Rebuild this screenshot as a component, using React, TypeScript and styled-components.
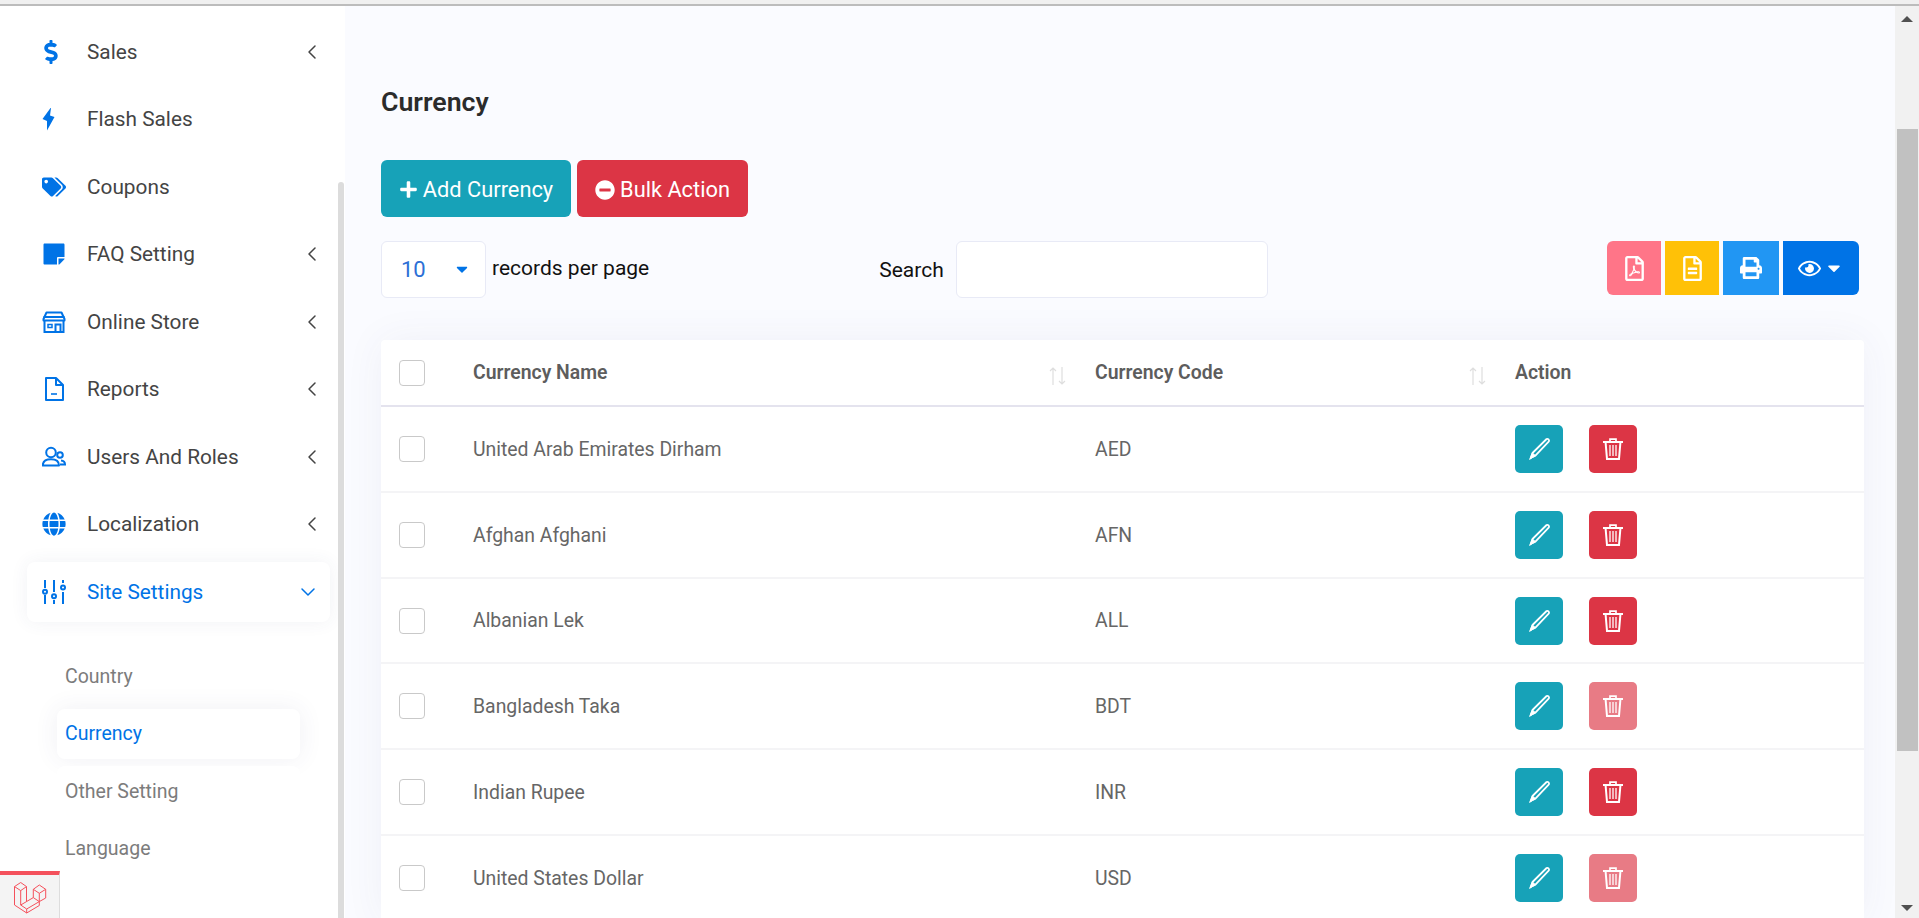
import React from 'react';
import styled, { createGlobalStyle } from 'styled-components';
import { FaDollarSign, FaTags, FaStickyNote, FaGlobe, FaPlus, FaMinusCircle, FaPrint, FaRegEye, FaCaretDown, FaRegFilePdf, FaRegFileAlt } from 'react-icons/fa';
import { FiChevronLeft, FiChevronDown } from 'react-icons/fi';

const GlobalStyle = createGlobalStyle`
  html, body { margin: 0; height: 100%; overflow: hidden; }
  body { font-family: Roboto, "Liberation Sans", sans-serif; background: #fff; }
  * { box-sizing: border-box; }
`;

const TopLine = styled.div`
  height: 6px;
  background: #f0f0f0;
  border-bottom: 2px solid #bcbcbc;
`;
const Shell = styled.div`
  display: flex;
  height: 912px;
  overflow: hidden;
`;
const Side = styled.aside`
  width: 345px;
  flex: none;
  display: flex;
  background: #fff;
  overflow: hidden;
`;
const SideBody = styled.nav`
  width: 338px;
  padding: 15.5px 8px 0 27px;
`;
const SideScroll = styled.div`
  width: 6px;
  height: 100%;
  padding-top: 176px;
  & > div { height: 100%; background: #dcdcdc; border-radius: 3px 3px 0 0; }
`;
const Item = styled.div<{ active?: boolean }>`
  height: 60px;
  margin-bottom: 7.5px;
  display: flex;
  align-items: center;
  padding: 0 6px 0 15px;
  border-radius: 8px;
  color: ${(p) => (p.active ? '#0073e6' : '#444')};
  background: #fff;
  box-shadow: ${(p) => (p.active ? '0 0 18px rgba(60,70,120,.07)' : 'none')};
  font-size: 20.8px;
`;
const ItemIcon = styled.span`
  width: 45px;
  flex: none;
  display: flex;
  align-items: center;
  color: #0073e6;
  font-size: 24px;
`;
const DollarIcon = styled(FaDollarSign)`
  margin-left: -3px;
`;
const ItemLabel = styled.span`
  flex: 1;
`;
const Chevron = styled.span<{ down?: boolean }>`
  display: flex;
  color: inherit;
  font-size: 24px;
  margin-right: ${(p) => (p.down ? '4px' : '0')};
  & svg { stroke-width: 1.5; }
`;
const SubList = styled.div`
  padding: 22px 30px 0 30px;
`;
const SubItem = styled.div<{ active?: boolean }>`
  height: 50px;
  margin-bottom: 7.5px;
  display: flex;
  align-items: center;
  padding-left: 8px;
  border-radius: 8px;
  font-size: 19.5px;
  color: ${(p) => (p.active ? '#0073e6' : '#7c7c7c')};
  background: #fff;
  box-shadow: ${(p) => (p.active ? '0 0 24px rgba(60,70,120,.08)' : 'none')};
`;
const Debugbar = styled.div`
  position: absolute;
  left: 0;
  top: 871px;
  width: 60px;
  height: 47px;
  background: #f4f4f4;
  border-top: 4px solid #f4515c;
  border-right: 1px solid #ddd;
  padding: 7px 0 0 14px;
`;
const Main = styled.main`
  flex: 1;
  min-width: 0;
  background: #fafbff;
  padding: 78px 31px 0 36px;
  overflow: hidden;
`;
const Title = styled.h1`
  margin: 0;
  height: 36px;
  line-height: 36px;
  font-size: 26.7px;
  font-weight: 600;
  color: #2b2b2b;
`;
const ButtonRow = styled.div`
  display: flex;
  gap: 6px;
  margin-top: 40px;
`;
const MainButton = styled.button<{ bg: string; w: number }>`
  width: ${(p) => p.w}px;
  height: 57px;
  border: 0;
  border-radius: 6px;
  padding: 2px 0 0;
  background: ${(p) => p.bg};
  color: #fff;
  font: 400 21.8px Roboto, sans-serif;
  display: flex;
  align-items: center;
  justify-content: center;
  gap: 5px;
`;
const Controls = styled.div`
  display: flex;
  align-items: flex-start;
  margin-top: 24px;
  height: 99px;
`;
const SelectBox = styled.div`
  width: 105px;
  height: 57px;
  background: #fff;
  border: 1px solid #e8eaf6;
  border-radius: 6px;
  display: flex;
  align-items: center;
  justify-content: space-between;
  padding: 0 14px 0 19px;
  color: #2c6fd6;
  font-size: 22px;
  & svg { color: #0073e6; font-size: 18px; margin-bottom: 2px; }
`;
const Records = styled.span`
  margin-left: 6px;
  line-height: 54px;
  font-size: 21px;
  color: #111;
`;
const SearchLabel = styled.label`
  margin-left: 230px;
  line-height: 58px;
  font-size: 21px;
  color: #111;
`;
const SearchInput = styled.div`
  width: 312px;
  height: 57px;
  margin-left: 12px;
  background: #fff;
  border: 1px solid #e8eaf6;
  border-radius: 6px;
`;
const ExportGroup = styled.div`
  margin-left: auto;
  margin-right: 5px;
  display: flex;
  gap: 4px;
`;
const ExportButton = styled.div<{ bg: string; w: number; pos?: string }>`
  width: ${(p) => p.w}px;
  height: 54px;
  background: ${(p) => p.bg};
  color: #fff;
  display: flex;
  align-items: center;
  justify-content: center;
  gap: 3px;
  font-size: 25px;
  border-radius: ${(p) => (p.pos === 'first' ? '6px 0 0 6px' : p.pos === 'last' ? '0 6px 6px 0' : '0')};
`;
const Card = styled.section`
  background: #fff;
  box-shadow: 0 0 40px rgba(60,70,120,.06);
  border-radius: 4px 4px 0 0;
`;
const Row = styled.div<{ head?: boolean; h: number }>`
  display: grid;
  grid-template-columns: 92px 622px 420px 1fr;
  height: ${(p) => p.h}px;
  align-items: center;
  border-bottom: 2px solid ${(p) => (p.head ? '#e4e3ee' : '#f4f4f6')};
  font-size: 19.4px;
  color: ${(p) => (p.head ? '#5d5d5d' : '#666')};
  font-weight: ${(p) => (p.head ? 600 : 400)};
`;
const CheckCell = styled.div`
  padding-left: 18px;
`;
const Check = styled.span`
  display: block;
  width: 26px;
  height: 26px;
  background: #fff;
  border: 1px solid #c9c9c9;
  border-radius: 4px;
`;
const HeadCell = styled.div`
  display: flex;
  justify-content: space-between;
  align-items: center;
`;
const SortIcon = styled.svg`
  width: 19px;
  height: 18px;
  margin-right: 28px;
  margin-top: 6px;
  color: #dedede;
`;
const ActionCell = styled.div`
  display: flex;
  gap: 26px;
`;
const ActionButton = styled.div<{ bg: string; faded?: boolean }>`
  width: 48px;
  height: 48px;
  border-radius: 5px;
  background: ${(p) => p.bg};
  opacity: ${(p) => (p.faded ? 0.65 : 1)};
  display: flex;
  align-items: center;
  justify-content: center;
  color: #fff;
`;
const PageScroll = styled.div`
  width: 24px;
  flex: none;
  background: #f1f1f1;
  display: flex;
  flex-direction: column;
  align-items: center;
`;
const ScrollArrow = styled.span<{ down?: boolean }>`
  flex: none;
  width: 0;
  height: 0;
  margin: ${(p) => (p.down ? 'auto 0 7px' : '10px 0 0')};
  border-left: 6px solid transparent;
  border-right: 6px solid transparent;
  ${(p) => (p.down ? 'border-top: 6px solid #505050;' : 'border-bottom: 6px solid #505050;')}
`;
const ScrollThumb = styled.div`
  width: 21px;
  height: 622px;
  flex: none;
  margin-top: 107px;
  background: #c1c1c1;
`;

const PencilIcon = () => (
  <svg width="24" height="24" viewBox="0 0 24 24" fill="none" stroke="#fff">
    <path d="M19.6 2c1.400-.6 3 .9 2.300 2.300L8.400 18.600 4 20.800l1.500-4.800z" strokeWidth="1.800" strokeLinejoin="round" />
    <path d="M5.300 16 2.600 22.400l5.800-3.800z" fill="#fff" strokeWidth="1" />
  </svg>
);
const TrashIcon = () => (
  <svg width="22" height="24" viewBox="0 0 22 24" fill="none" stroke="#fff">
    <path d="M1 5h20" strokeWidth="2" />
    <path d="M8 5V2.200h6V5" strokeWidth="1.700" />
    <path d="M3.600 5.500 5 22h12l1.400-16.500" strokeWidth="2" />
    <path d="M8 8v11M11 8v11M14 8v11" strokeWidth="1.300" />
  </svg>
);
const BoltIcon = () => (
  <svg width="24" height="24" viewBox="0 0 24 24" fill="currentColor">
    <path d="M8.500 1 .5 12 5 14l0 9.500L12.500 10 8 8.500 9 1z" />
  </svg>
);
const StoreIcon = () => (
  <svg width="24" height="24" viewBox="0 0 24 24" fill="none" stroke="currentColor" strokeWidth="2">
    <path d="M4.500 2.500h15l3 6.500v1.500h-21V9z" strokeLinejoin="round" />
    <path d="M1.500 7h21" />
    <path d="M2.500 10.500V22h19V10.500M13.500 22v-7.500h5V22" />
    <rect x="6" y="14.500" width="4" height="3" strokeWidth="1.500" />
  </svg>
);
const ReportIcon = () => (
  <svg width="24" height="24" viewBox="0 0 24 24" fill="none" stroke="currentColor" strokeWidth="2">
    <path d="M4 1h10l7 7v15H4zM14 1v7h7" strokeLinejoin="round" />
    <path d="M9 17h6" strokeWidth="1.600" />
  </svg>
);
const UsersIcon = () => (
  <svg width="24" height="24" viewBox="0 0 24 24" fill="none" stroke="currentColor" strokeWidth="2">
    <circle cx="9" cy="7.500" r="4.800" />
    <path d="M0.800 20.500c0-4.500 3.500-6.200 8.200-6.200s8 1.700 8 6.200z" strokeLinejoin="round" />
    <circle cx="18" cy="10" r="2.800" />
    <path d="M19 15.500c2.500.2 4 1.500 4 4h-5" />
  </svg>
);
const SlidersIcon = () => (
  <svg width="24" height="24" viewBox="0 0 24 24" fill="none" stroke="currentColor" strokeWidth="2">
    <path d="M3 0v8M3 15v9M12 0v12M12 20v4M21 0v3M21 12v12" />
    <circle cx="3" cy="11.800" r="2" />
    <circle cx="12" cy="16.300" r="2" />
    <circle cx="21" cy="7.600" r="2" />
  </svg>
);
const LaravelLogo = () => (
  <svg width="33" height="33" viewBox="0 0 33 33" fill="none" stroke="#f4515c" strokeWidth="1" strokeLinejoin="round">
    <path d="M.5 4.600 6.700.5l5.800 4.100-5.800 4zM.5 4.600V23l12.200 8 12.600-7.500v-3.900M12.500 4.600V19M6.700 8.600V23l6 4v4M12.700 27l12.600-7.400 6.400-3.600V7.300M6.700 23l12.600-7.400" />
    <path d="M19.300 7.300 25.300 3l6.400 4.300-6.400 4zM19.300 7.300v8.300l6 4M25.300 11.300v8.300" />
  </svg>
);

const SortArrows = () => (
  <SortIcon viewBox="0 0 19 18" fill="none" stroke="currentColor" strokeWidth="1.2">
    <path d="M5 18V1M2 4l3-3 3 3M14 0v17M11 14l3 3 3-3" />
  </SortIcon>
);

const rows = [
  { name: 'United Arab Emirates Dirham', code: 'AED', faded: false, h: 86 },
  { name: 'Afghan Afghani', code: 'AFN', faded: false, h: 86 },
  { name: 'Albanian Lek', code: 'ALL', faded: false, h: 85 },
  { name: 'Bangladesh Taka', code: 'BDT', faded: true, h: 86 },
  { name: 'Indian Rupee', code: 'INR', faded: false, h: 86 },
  { name: 'United States Dollar', code: 'USD', faded: true, h: 86 },
];

const menu = [
  { label: 'Sales', icon: <DollarIcon />, more: true },
  { label: 'Flash Sales', icon: <BoltIcon />, more: false },
  { label: 'Coupons', icon: <FaTags />, more: false },
  { label: 'FAQ Setting', icon: <FaStickyNote />, more: true },
  { label: 'Online Store', icon: <StoreIcon />, more: true },
  { label: 'Reports', icon: <ReportIcon />, more: true },
  { label: 'Users And Roles', icon: <UsersIcon />, more: true },
  { label: 'Localization', icon: <FaGlobe />, more: true },
];

export default function App() {
  return (
    <>
      <GlobalStyle />
      <TopLine />
      <Shell>
        <Side>
          <SideBody>
            {menu.map((m) => (
              <Item key={m.label}>
                <ItemIcon>{m.icon}</ItemIcon>
                <ItemLabel>{m.label}</ItemLabel>
                {m.more && <Chevron><FiChevronLeft /></Chevron>}
              </Item>
            ))}
            <Item active>
              <ItemIcon><SlidersIcon /></ItemIcon>
              <ItemLabel>Site Settings</ItemLabel>
              <Chevron down><FiChevronDown /></Chevron>
            </Item>
            <SubList>
              <SubItem>Country</SubItem>
              <SubItem active>Currency</SubItem>
              <SubItem>Other Setting</SubItem>
              <SubItem>Language</SubItem>
            </SubList>
          </SideBody>
          <SideScroll><div /></SideScroll>
        </Side>
        <Main>
          <Title>Currency</Title>
          <ButtonRow>
            <MainButton bg="#17a2b8" w={190}><FaPlus size={19} />Add Currency</MainButton>
            <MainButton bg="#dc3545" w={171}><FaMinusCircle size={20} />Bulk Action</MainButton>
          </ButtonRow>
          <Controls>
            <SelectBox>10<FaCaretDown /></SelectBox>
            <Records>records per page</Records>
            <SearchLabel>Search</SearchLabel>
            <SearchInput />
            <ExportGroup>
              <ExportButton bg="#ff7588" w={54} pos="first"><FaRegFilePdf /></ExportButton>
              <ExportButton bg="#ffc107" w={54}><FaRegFileAlt /></ExportButton>
              <ExportButton bg="#2196f3" w={56}><FaPrint size={22} /></ExportButton>
              <ExportButton bg="#0073e6" w={76} pos="last"><FaRegEye size={23} /><FaCaretDown size={20} /></ExportButton>
            </ExportGroup>
          </Controls>
          <Card>
            <Row head h={67}>
              <CheckCell><Check /></CheckCell>
              <HeadCell>Currency Name<SortArrows /></HeadCell>
              <HeadCell>Currency Code<SortArrows /></HeadCell>
              <HeadCell>Action</HeadCell>
            </Row>
            {rows.map((r) => (
              <Row key={r.code} h={r.h}>
                <CheckCell><Check /></CheckCell>
                <div>{r.name}</div>
                <div>{r.code}</div>
                <ActionCell>
                  <ActionButton bg="#17a2b8"><PencilIcon /></ActionButton>
                  <ActionButton bg="#dc3545" faded={r.faded}><TrashIcon /></ActionButton>
                </ActionCell>
              </Row>
            ))}
          </Card>
        </Main>
        <PageScroll>
          <ScrollArrow />
          <ScrollThumb />
          <ScrollArrow down />
        </PageScroll>
      </Shell>
      <Debugbar><LaravelLogo /></Debugbar>
    </>
  );
}
